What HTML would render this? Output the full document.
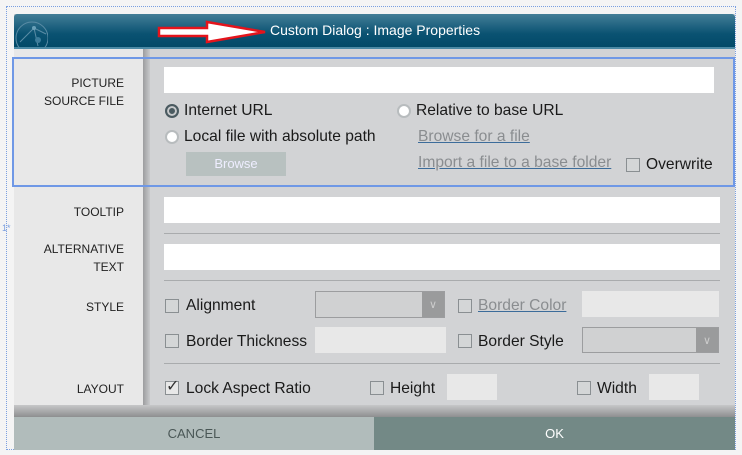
<!DOCTYPE html>
<html><head><meta charset="utf-8"><style>
*{margin:0;padding:0;box-sizing:border-box}
body{width:742px;height:455px;position:relative;overflow:hidden;background:#f4f4f4;font-family:"Liberation Sans",sans-serif;color:#1a1a1a}
.a{position:absolute}
.lbl{position:absolute;right:618px;font-size:12px;text-align:right;line-height:18px;color:#222}
.t{position:absolute;font-size:15.6px;white-space:nowrap}
.in{position:absolute;background:#fff}
.g{position:absolute;background:#e8e8e8}
.cb{position:absolute;width:14px;height:14px;border:1px solid #8a8f92;background:#d4d6d7}
.rd{position:absolute;width:14px;height:14px;border-radius:50%;background:#fff;border:2px solid #b8bcbe}
.ln{position:absolute;color:#8a8d90;text-decoration:underline;text-decoration-color:#3c6c9a;font-size:15.6px;white-space:nowrap}
.hr{position:absolute;left:164px;width:556px;height:1px;background:#a9abad}
.dd{position:absolute;border:1px solid #9c9d9f;background:#d0d1d2}
.dd i{position:absolute;right:0;top:0;bottom:0;width:22px;background:#9a9b9c;color:#ccc;font-style:normal;font-size:11px;text-align:center;line-height:26px}
</style></head><body>
<div class="a" style="left:6px;top:6px;width:730px;height:444px;border:1px dotted #7a9fe0"></div>
<div class="a" style="left:14px;top:14px;width:721px;height:436px;background:#d2d3d5"></div>
<div class="a" style="left:14px;top:48px;width:129px;height:369px;background:#e8e8e8"></div>
<div class="a" style="left:143px;top:48px;width:7px;height:369px;background:linear-gradient(90deg,#9c9d9f,#c8c9cb)"></div>
<div class="a" style="left:14px;top:14px;width:721px;height:35px;background:linear-gradient(#437e97,#0a5272 60%,#024a68);border-bottom:2px solid #4b8aa5;border-radius:3px 3px 0 0"></div>
<svg class="a" style="left:14px;top:16px" width="34" height="32"><g stroke="#5a8ca5" fill="none" stroke-width="1"><circle cx="18" cy="22" r="16"/><path d="M6 26 L20 12 L32 18 M20 12 L24 30"/></g><circle cx="20" cy="12" r="2" fill="#6aa0b8"/><circle cx="24" cy="24" r="3" fill="#3c7c9a"/></svg>
<svg class="a" style="left:157px;top:20px" width="110" height="24"><path d="M2 8 H50 V2 L108 12 L50 22 V16 H2 Z" fill="#fff" stroke="#e4141c" stroke-width="2.5"/></svg>
<div class="t" style="left:270px;top:22px;color:#fff;font-size:14px">Custom Dialog : Image Properties</div>
<div class="a" style="left:14px;top:405px;width:721px;height:12px;background:linear-gradient(#c6c7c8,#8e8f90)"></div>
<div class="a" style="left:14px;top:417px;width:360px;height:33px;background:#b1bcbb;color:#4a5756;font-size:13px;text-align:center;line-height:33px">CANCEL</div>
<div class="a" style="left:374px;top:417px;width:361px;height:33px;background:#738986;color:#fff;font-size:13px;text-align:center;line-height:33px">OK</div>
<div class="a" style="left:12px;top:57px;width:723px;height:130px;border:2px solid #6f98e6"></div>
<div class="a" style="left:2px;top:223px;color:#7a9fe0;font-size:9px">1*</div>

<div class="lbl" style="top:74px">PICTURE<br>SOURCE FILE</div>
<div class="in" style="left:164px;top:67px;width:550px;height:26px"></div>
<div class="rd" style="left:165px;top:104px;border-color:#4a5a60;background:#4a5a60;box-shadow:inset 0 0 0 2px #c8cacc"></div>
<div class="t" style="left:184px;top:102px">Internet URL</div>
<div class="rd" style="left:165px;top:130px"></div>
<div class="t" style="left:184px;top:128px">Local file with absolute path</div>
<div class="a" style="left:186px;top:152px;width:100px;height:24px;background:#b8c1c0;color:#eef;font-size:13px;text-align:center;line-height:24px">Browse</div>
<div class="rd" style="left:397px;top:104px"></div>
<div class="t" style="left:416px;top:102px">Relative to base URL</div>
<div class="ln" style="left:418px;top:128px">Browse for a file</div>
<div class="ln" style="left:418px;top:154px">Import a file to a base folder</div>
<div class="cb" style="left:626px;top:158px"></div>
<div class="t" style="left:646px;top:156px">Overwrite</div>

<div class="lbl" style="top:203px">TOOLTIP</div>
<div class="in" style="left:164px;top:197px;width:556px;height:26px"></div>
<div class="hr" style="top:233px"></div>
<div class="lbl" style="top:240px">ALTERNATIVE<br>TEXT</div>
<div class="in" style="left:164px;top:244px;width:556px;height:26px"></div>
<div class="hr" style="top:280px"></div>

<div class="lbl" style="top:298px">STYLE</div>
<div class="cb" style="left:165px;top:299px"></div>
<div class="t" style="left:186px;top:297px">Alignment</div>
<div class="dd" style="left:315px;top:291px;width:130px;height:27px"><i>&#8744;</i></div>
<div class="cb" style="left:458px;top:299px"></div>
<div class="ln" style="left:478px;top:297px">Border Color</div>
<div class="g" style="left:582px;top:291px;width:137px;height:26px"></div>
<div class="cb" style="left:165px;top:334px"></div>
<div class="t" style="left:186px;top:333px">Border Thickness</div>
<div class="g" style="left:315px;top:327px;width:131px;height:26px"></div>
<div class="cb" style="left:458px;top:334px"></div>
<div class="t" style="left:478px;top:333px">Border Style</div>
<div class="dd" style="left:582px;top:327px;width:137px;height:26px"><i>&#8744;</i></div>
<div class="hr" style="top:363px"></div>

<div class="lbl" style="top:380px">LAYOUT</div>
<div class="cb" style="left:165px;top:381px;background:#e8e8e8"></div>
<div class="t" style="left:166px;top:376px;font-size:16px;color:#333">&#10003;</div>
<div class="t" style="left:186px;top:380px">Lock Aspect Ratio</div>
<div class="cb" style="left:370px;top:381px"></div>
<div class="t" style="left:390px;top:380px">Height</div>
<div class="g" style="left:447px;top:374px;width:50px;height:26px"></div>
<div class="cb" style="left:577px;top:381px"></div>
<div class="t" style="left:597px;top:380px">Width</div>
<div class="g" style="left:649px;top:374px;width:50px;height:26px"></div>
</body></html>
